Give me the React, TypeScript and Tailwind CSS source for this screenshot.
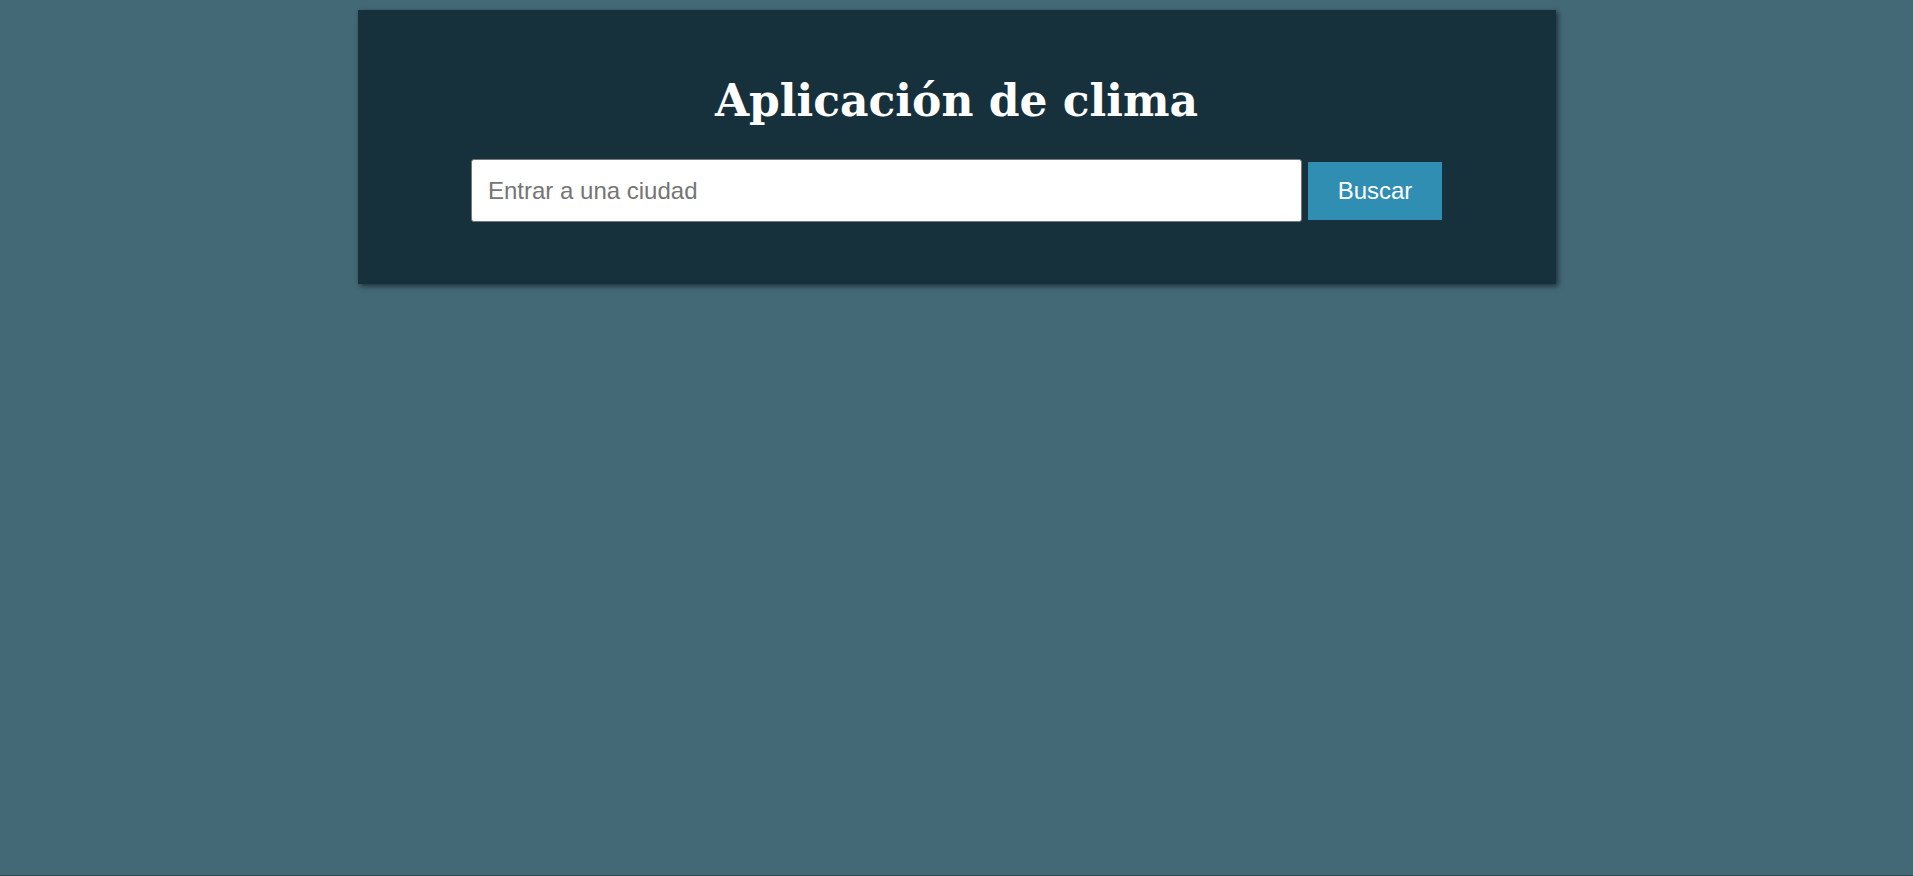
import React, { useState } from 'react';

export default function App() {
  const [city, setCity] = useState('');

  return (
    <div className="h-[876px] bg-[#436876] border-b border-[#2e4650] pt-[10px]">
      {/* Weather card */}
      <div className="mx-auto w-[1198px] bg-[#16303c] shadow-[2px_2px_5px_rgba(0,0,0,0.55)] pt-[63px] pb-[62px]">
        <h1 className="text-center text-white font-bold text-[44px] leading-[56px] font-['DejaVu_Serif',Georgia,serif]">
          Aplicación de clima
        </h1>

        <form
          className="mt-[30px] flex items-center justify-center gap-[6px]"
          onSubmit={(e) => e.preventDefault()}
        >
          <input
            type="text"
            value={city}
            onChange={(e) => setCity(e.target.value)}
            placeholder="Entrar a una ciudad"
            className="w-[831px] h-[63px] rounded-[3px] border border-[#767676] bg-white px-[16px] text-[24px] text-[#333] placeholder:text-[#757575] outline-none font-['Liberation_Sans',Arial,sans-serif]"
          />
          <button
            type="submit"
            className="w-[134px] h-[58px] bg-[#308eb2] text-white text-[24px] font-['Liberation_Sans',Arial,sans-serif]"
          >
            Buscar
          </button>
        </form>
      </div>
    </div>
  );
}
